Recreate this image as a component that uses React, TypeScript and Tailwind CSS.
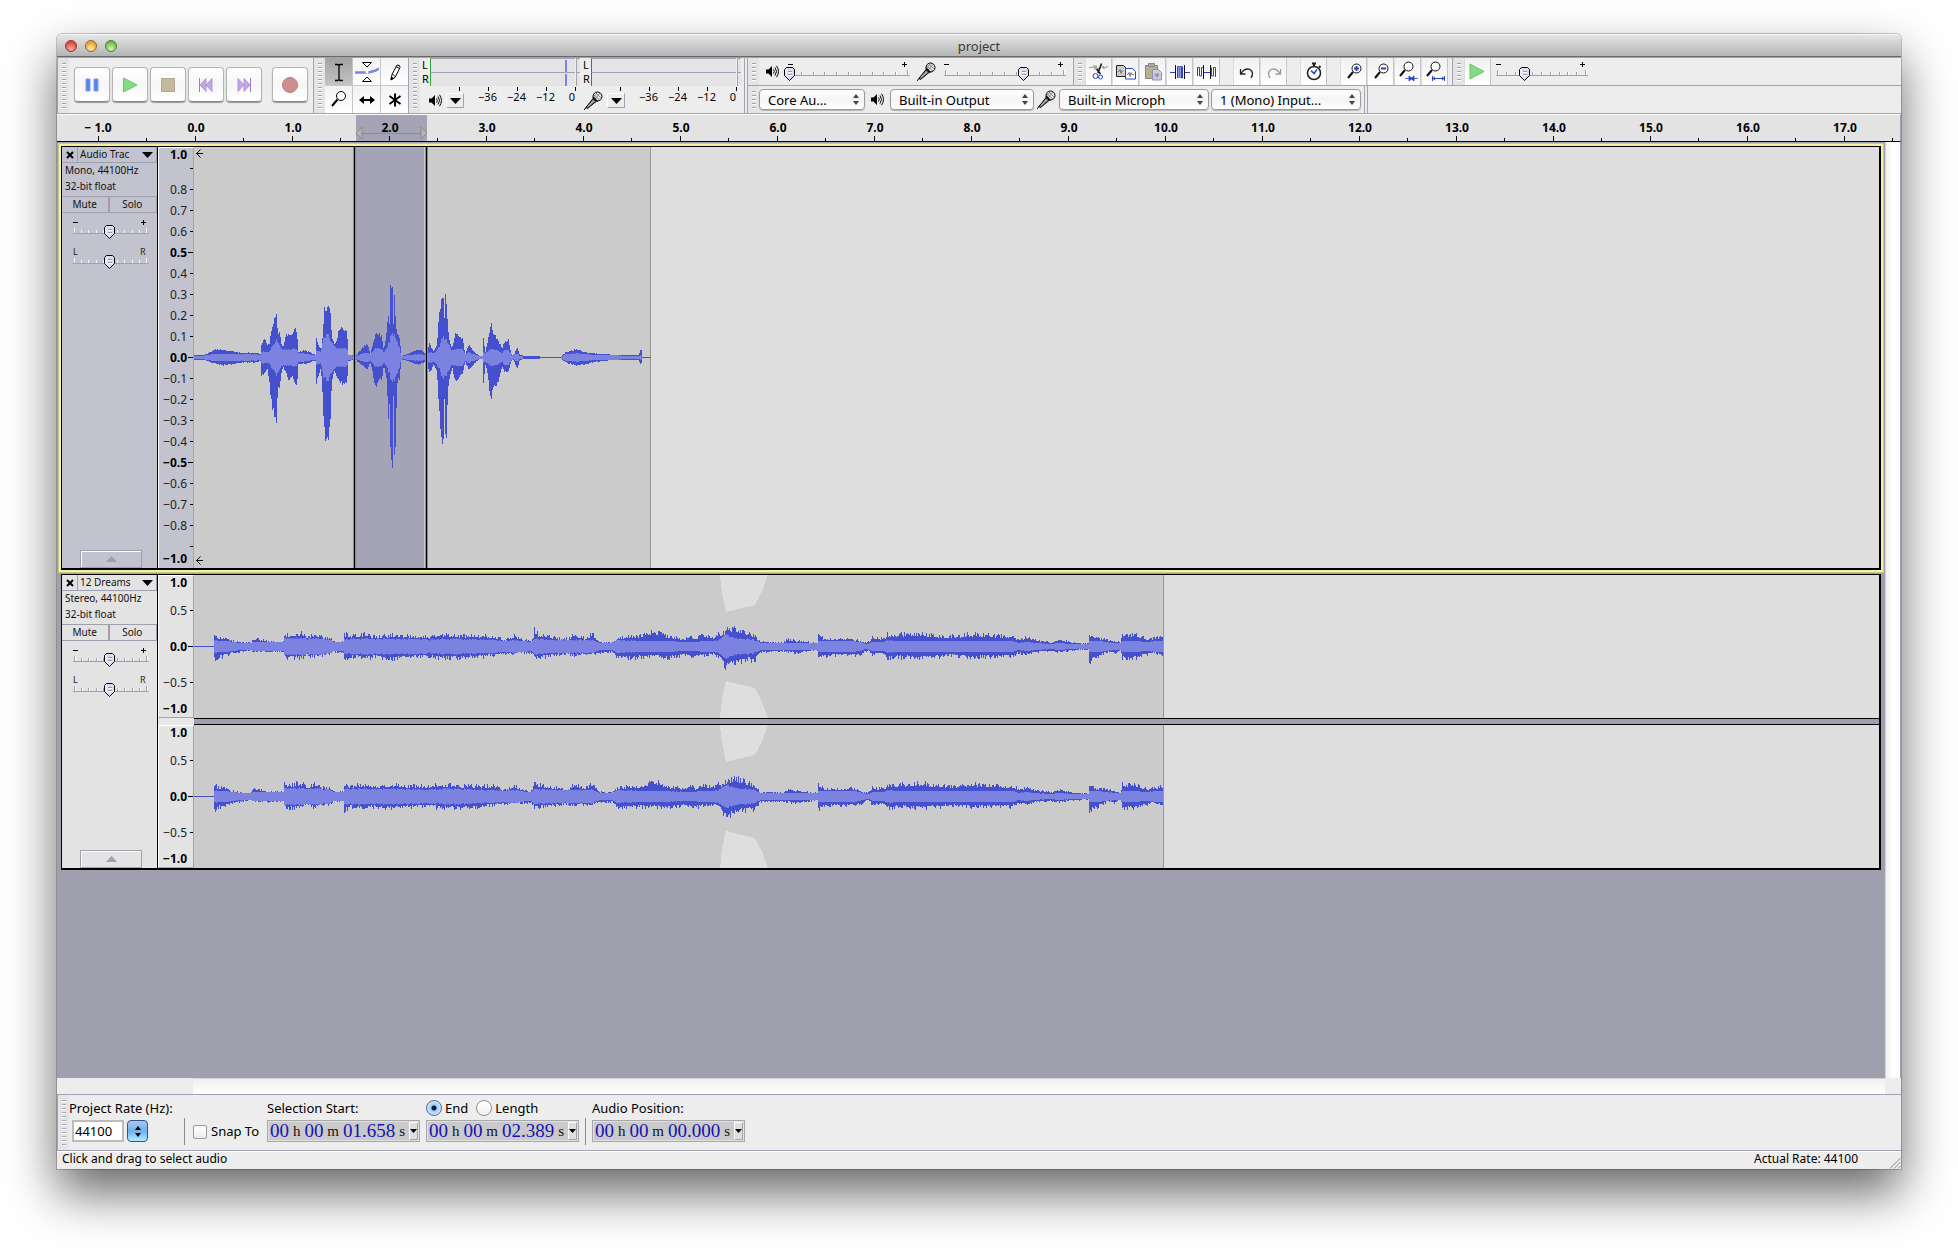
import React, { useMemo, useState } from "react";

type EnvPoint = [x: number, top: number, bottom: number, rms: number];

// Offsets in thirds of a pixel, amplitudes likewise.
const SPEECH: EnvPoint[] = [
  [0, 6, 6, 4], [28, 6, 6, 4], [63, 24, 18, 10], [88, 22, 22, 10], [113, 20, 20, 9], [138, 13, 15, 8], [188, 14, 14, 8],
  [198, 10, 10, 7], [201, 40, 54, 15], [210, 62, 52, 16], [220, 38, 35, 14], [226, 45, 90, 18], [232, 95, 150, 30],
  [240, 120, 185, 42], [247, 139, 205, 56], [250, 74, 100, 40], [256, 78, 98, 34], [260, 45, 50, 25], [266, 30, 30, 20],
  [273, 62, 42, 22], [283, 74, 74, 22], [293, 76, 58, 25], [305, 88, 94, 24], [309, 60, 60, 20], [311, 16, 20, 12],
  [333, 20, 18, 10], [363, 8, 8, 5], [366, 64, 80, 20], [373, 36, 50, 18], [380, 22, 32, 15], [384, 60, 110, 48],
  [387, 110, 170, 60], [390, 150, 235, 62], [396, 158, 275, 66], [403, 175, 250, 66], [408, 150, 200, 52], [412, 70, 75, 42],
  [420, 40, 42, 30], [428, 58, 65, 26], [436, 95, 75, 25], [451, 88, 80, 25], [458, 80, 80, 25], [462, 7, 10, 6],
  [475, 6, 6, 4], [486, 7, 8, 4], [503, 28, 24, 10], [518, 42, 38, 12], [528, 10, 15, 8], [543, 75, 90, 25],
  [553, 75, 74, 25], [563, 64, 64, 25], [568, 16, 20, 12], [576, 80, 64, 25], [583, 150, 215, 45], [586, 85, 125, 45],
  [588, 210, 285, 70], [594, 212, 330, 76], [597, 112, 112, 60], [600, 208, 308, 62], [603, 140, 280, 56],
  [606, 95, 155, 50], [610, 68, 64, 40], [617, 62, 75, 24], [619, 3, 3, 2], [638, 9, 9, 5], [673, 25, 22, 8],
  [693, 12, 12, 6], [706, 44, 48, 15], [718, 16, 20, 10], [728, 44, 48, 20], [733, 125, 150, 30], [738, 165, 210, 40],
  [741, 190, 268, 50], [747, 194, 268, 60], [749, 70, 70, 55], [752, 202, 260, 60], [756, 180, 250, 50],
  [758, 130, 185, 45], [761, 94, 104, 40], [766, 46, 64, 30], [773, 30, 30, 20], [784, 80, 80, 25], [794, 68, 64, 25],
  [806, 54, 48, 22], [812, 8, 10, 7], [823, 38, 38, 15], [838, 20, 20, 8], [853, 4, 4, 3], [864, 4, 4, 3], [866, 64, 84, 15],
  [873, 16, 20, 12], [880, 54, 54, 18], [890, 108, 138, 25], [896, 82, 92, 24], [903, 68, 94, 20], [913, 48, 68, 18],
  [923, 26, 26, 12], [930, 48, 42, 20], [943, 54, 40, 20], [950, 10, 10, 7], [958, 5, 5, 3], [968, 32, 38, 12],
  [976, 6, 6, 3], [988, 4, 4, 1], [1033, 4, 4, 1], [1038, 1, 1, 0], [1098, 1, 1, 0], [1113, 14, 14, 8], [1148, 25, 24, 12],
  [1173, 14, 19, 8], [1208, 11, 11, 6], [1258, 7, 7, 5], [1308, 6, 6, 4], [1333, 7, 7, 4], [1340, 30, 24, 6], [1343, 1, 1, 0],
  [1368, 1, 1, 0],
];

const MUSIC: EnvPoint[] = [
  [0, 0, 0, 0], [19, 0, 0, 0], [20, 15, 14, 5], [21, 14, 20, 6], [23, 10, 13, 5], [33, 10, 10, 5], [37, 6, 8, 4],
  [50, 4, 5, 3], [57, 4, 4, 3], [58, 9, 5, 4], [65, 8, 6, 4], [75, 5, 6, 4], [89, 5, 5, 4], [90, 14, 10, 8], [92, 13, 14, 8],
  [108, 15, 12, 8], [112, 11, 10, 7], [121, 14, 12, 8], [130, 10, 9, 7], [136, 9, 8, 6], [140, 5, 6, 4], [149, 5, 6, 4],
  [150, 14, 16, 7], [156, 12, 12, 7], [172, 14, 13, 7], [181, 11, 12, 7], [200, 13, 14, 7], [215, 12, 12, 7],
  [235, 11, 11, 6], [245, 14, 13, 7], [268, 12, 13, 7], [290, 12, 11, 6], [300, 12, 10, 6], [309, 7, 8, 5],
  [320, 12, 8, 6], [326, 8, 7, 5], [337, 6, 7, 4], [339, 10, 10, 6], [340, 20, 13, 7], [344, 13, 13, 7], [360, 10, 10, 6],
  [374, 8, 8, 6], [380, 14, 10, 6], [390, 9, 9, 6], [398, 14, 9, 6], [405, 5, 7, 3], [418, 4, 6, 3], [423, 10, 13, 6],
  [446, 12, 12, 5], [461, 17, 12, 5], [475, 11, 13, 5], [490, 8, 10, 4], [496, 14, 12, 4], [501, 9, 12, 4],
  [508, 13, 10, 5], [519, 10, 9, 5], [524, 16, 12, 6], [527, 13, 16, 8], [532, 18, 25, 11], [540, 21, 18, 8],
  [546, 19, 17, 7], [555, 15, 15, 7], [560, 12, 16, 6], [566, 5, 6, 3], [589, 4, 5, 3], [593, 8, 6, 3], [603, 6, 7, 3],
  [621, 4, 4, 3], [623, 4, 4, 3], [624, 14, 14, 5], [630, 8, 11, 5], [657, 9, 10, 5], [666, 6, 9, 4], [671, 4, 5, 2],
  [674, 5, 4, 2], [678, 10, 9, 4], [689, 9, 8, 4], [691, 10, 12, 5], [693, 14, 14, 6], [703, 13, 12, 5], [726, 15, 13, 5],
  [742, 12, 12, 5], [757, 11, 10, 5], [762, 12, 11, 5], [779, 14, 12, 5], [799, 12, 12, 5], [819, 11, 11, 5], [824, 8, 7, 3],
  [832, 10, 9, 4], [842, 7, 6, 3], [857, 4, 5, 2], [865, 8, 6, 3], [878, 4, 4, 2], [894, 3, 3, 2], [895, 15, 20, 5],
  [898, 10, 15, 5], [905, 9, 11, 5], [912, 8, 6, 4], [921, 6, 7, 3], [926, 4, 3, 3], [928, 14, 13, 5], [942, 13, 13, 5],
  [953, 8, 9, 4], [960, 9, 7, 5], [968, 12, 11, 5],
];

function noise(n: number) {
  const v = Math.sin(n * 127.1 + 11.7) * 43758.5453;
  return v - Math.floor(v);
}

function buildWave(points: EnvPoint[], center: number, divisor: number, seed: number, rough: number) {
  let peak = "";
  let rms = "";
  const last = Math.floor(points[points.length - 1][0] / divisor);
  const jitter = (n: number) => 1.04 - rough * (1 - noise(n) ** 2);
  let i = 0;

  for (let x = 0; x <= last; x++) {
    const pos = x * divisor;
    while (i < points.length - 2 && points[i + 1][0] <= pos) i++;
    const a = points[i];
    const b = points[i + 1];
    const f = Math.min(1, Math.max(0, (pos - a[0]) / (b[0] - a[0])));
    const mix = (k: 1 | 2 | 3) => (a[k] + (b[k] - a[k]) * f) / divisor;

    const top = Math.round(mix(1) * jitter(x + seed));
    const bottom = Math.round(mix(2) * jitter(x * 3 + seed + 5));
    const inner = Math.round(mix(3) * (0.9 + 0.2 * noise(x * 2 + seed + 9)));

    peak += `M${x} ${center - top}h1v${top + bottom + 1}h-1z`;
    if (inner > 0) rms += `M${x} ${center - inner}h1v${inner * 2 + 1}h-1z`;
  }
  return { peak, rms };
}

function Grip({ tall = false }: { tall?: boolean }) {
  return (
    <div className="flex w-[11px] shrink-0 items-center justify-center bg-[#e4e4e6]">
      <div
        className={
          (tall ? "h-[46px]" : "h-[18px]") +
          " w-1 bg-[repeating-linear-gradient(to_bottom,#a2a2b2_0px,#a2a2b2_1px,#ffffff_1px,#ffffff_2px,#e4e4e6_2px,#e4e4e6_4px)]"
        }
      />
    </div>
  );
}

function Speaker() {
  return (
    <svg className="shrink-0" width="13" height="13" viewBox="0 0 13 13" fill="none" stroke="#000">
      <path d="M0 4.500h2.500L6 1v11L2.500 8.500H0z" fill="#000" stroke="none" />
      <path d="M7.500 4.500q1.600 2 0 4M9 2.500q3 4 0 8M10.500 .8q4 5.700 0 11.400" strokeWidth="1" />
    </svg>
  );
}

function Mic() {
  return (
    <svg className="shrink-0" width="19" height="19" viewBox="0 0 19 19" fill="none" stroke="#000">
      <path d="M0 19l3-4" />
      <path d="M2 16.500L9 7.500l3 3L3.500 17.500z" fill="#777" />
      <path d="M4 15.500l6-6" stroke="#ddd" />
      <circle cx="13.500" cy="5.500" r="4.500" fill="#e6e6e6" />
      <path d="M10 4l6 5M12 2l5 5M11 8l5-6M9.500 6l4-4.500" stroke="#666" strokeWidth=".7" />
      <path d="M9 6l4.500 4.500" strokeWidth="1.500" />
    </svg>
  );
}

type SliderProps = { label: string; length: number; initial: number; ends?: "sign" | "pan"; onDark?: boolean };

function Slider({ label, length, initial, ends = "sign", onDark = false }: SliderProps) {
  const [value, setValue] = useState(initial);
  const width = length + 10;
  const first = 6;
  const span = length - 4;
  const thumb = Math.round(first + span * value) - 5;
  const ticks = Array.from({ length: 11 }, (_, i) => Math.round(first + (span * i) / 10));

  return (
    <div className="relative h-6 shrink-0">
      <svg width={width} height="24" className="block" shapeRendering="crispEdges">
        {ends === "sign" ? (
          <path d={`M5 4h5v1h-5zM${length - 3} 4h5v1h-5zM${length - 1} 2h1v5h-1z`} fill="#000" />
        ) : (
          <>
            <text x="5" y="7" fontSize="9" fill="#222">L</text>
            <text x={length - 4} y="7" fontSize="9" fill="#222">R</text>
          </>
        )}
        <path d={`M5 15h${length}v1h-${length}z`} fill="#9f9fb0" />
        {ticks.map((x, i) => {
          const end = i === 0 || i === 10;
          return (
            <g key={x}>
              <rect x={x + 1} y={end ? 10 : 12} width="1" height={end ? 5 : 3} fill={onDark ? "#c3c3cf" : "#fff"} />
              <rect x={x} y={end ? 10 : 12} width="1" height={end ? 5 : 3} fill={onDark ? "#f4f4fa" : "#9f9fb0"} />
            </g>
          );
        })}
        <g transform={`translate(${thumb} 7)`} shapeRendering="auto">
          <path d="M2.500 .5h6l2 2v6l-5 5-5-5v-6z" fill="#dcdcf0" stroke="#000" />
          <path d="M2 2.500v6l3 3" stroke="#fff" fill="none" />
          <path d="M4 4.500h4M4 7.500h4" stroke="#9696b4" />
          <path d="M4 5.500h4M4 8.500h4" stroke="#fff" />
        </g>
      </svg>
      <input
        type="range"
        aria-label={label}
        min={0}
        max={1}
        step={0.01}
        value={value}
        onChange={(e) => setValue(Number(e.target.value))}
        className="absolute inset-0 m-0 h-full w-full opacity-0"
      />
    </div>
  );
}

function TransportButton({ label, children, className = "" }: { label: string; children: React.ReactNode; className?: string }) {
  return (
    <button
      type="button"
      aria-label={label}
      className={
        "flex h-[35px] w-9 items-center justify-center rounded-[4px] border border-[#b4b4b4] border-b-[#858585] bg-linear-to-b from-white via-[#f6f6f6] to-white shadow-[0_1px_1px_rgba(0,0,0,0.35)] " +
        className
      }
    >
      {children}
    </button>
  );
}

function Skip({ forward = false }: { forward?: boolean }) {
  return (
    <svg width="16" height="16" viewBox="0 0 16 16" className={forward ? "-scale-x-100" : ""}>
      <path d="M1.500 1v14" stroke="#9a7cc8" />
      <path d="M8 1.500v13L2 8zM14 1.500v13L8 8z" fill="#c3a6e4" stroke="#a68acb" strokeWidth=".8" />
    </svg>
  );
}

function Transport() {
  return (
    <div className="flex w-[257px] shrink-0 border-r border-l border-[#a2a2b2]">
      <Grip tall />
      <div className="flex items-center gap-[2px] pb-[2px] pl-[5px]">
        <TransportButton label="Pause">
          <svg width="14" height="14" viewBox="0 0 14 14">
            <path d="M1 1h4v12H1zM9 1h4v12H9z" fill="#5583ee" stroke="#7aa0f5" />
          </svg>
        </TransportButton>
        <TransportButton label="Play">
          <svg width="16" height="16" viewBox="0 0 16 16">
            <path d="M1.500 1v14L15 8z" fill="#86da86" stroke="#6cc36c" />
          </svg>
        </TransportButton>
        <TransportButton label="Stop">
          <svg width="14" height="14" viewBox="0 0 14 14">
            <path d="M.5 .5h13v13H.5z" fill="#c4b89e" stroke="#b3a78d" />
          </svg>
        </TransportButton>
        <TransportButton label="Skip to Start"><Skip /></TransportButton>
        <TransportButton label="Skip to End"><Skip forward /></TransportButton>
        <TransportButton label="Record" className="ml-2">
          <svg width="16" height="16" viewBox="0 0 16 16">
            <circle cx="8" cy="8" r="7.500" fill="#cb8f8f" stroke="#b97e7e" />
          </svg>
        </TransportButton>
      </div>
    </div>
  );
}

const TOOLS: { label: string; icon: React.ReactNode }[] = [
  {
    label: "Selection Tool",
    icon: <path d="M8 4.500h3l1 1 1-1h3M8 20.500h3l1-1 1 1h3M12 5v15" stroke="#000" strokeWidth="1.300" fill="none" />,
  },
  {
    label: "Envelope Tool",
    icon: (
      <>
        <path d="M0 12.500h11q7 0 13-4" stroke="#7c84e2" strokeWidth="2.500" fill="none" />
        <path d="M7.500 2.500h9l-4.500 4.500zM7.500 21.500h9l-4.500-4.500z" fill="#fff" stroke="#000" />
        <circle cx="12" cy="12" r="1.500" fill="#fff" />
      </>
    ),
  },
  {
    label: "Draw Tool",
    icon: (
      <>
        <path d="M8 19.500l1-5 5-9.500 2.500 .5 .5 2-5 10z" fill="#fff" stroke="#000" />
        <path d="M8 20l.5-3 1.800 1.500zM13 6.500l3.500 2M9.500 14l2.500 2.500" fill="#000" stroke="#000" />
      </>
    ),
  },
  {
    label: "Zoom Tool",
    icon: (
      <>
        <circle cx="14" cy="8" r="4.500" fill="#fff" stroke="#000" />
        <path d="M10.500 11.500L5 18" stroke="#000" strokeWidth="2" />
      </>
    ),
  },
  {
    label: "Time Shift Tool",
    icon: <path d="M4 12l5-4v3h6V8l5 4-5 4v-3H9v3z" fill="#000" />,
  },
  {
    label: "Multi-Tool Mode",
    icon: <path d="M12 5.500v13M6.500 8l11 8M17.500 8l-11 8" stroke="#000" strokeWidth="2" />,
  },
];

function Tools() {
  return (
    <div className="flex w-[95px] shrink-0 border-r border-[#a2a2b2]">
      <Grip tall />
      <div className="grid flex-1 grid-cols-3 gap-px bg-[#c6c6c8]">
        {TOOLS.map((tool, i) => (
          <button
            key={tool.label}
            type="button"
            aria-label={tool.label}
            className={
              "flex h-[27px] items-center justify-center " +
              (i === 0 ? "bg-linear-to-b from-[#a2a2a2] to-[#c4c4c4]" : "bg-linear-to-b from-[#f2f2f2] to-white")
            }
          >
            <svg width="24" height="24" viewBox="0 0 24 24">{tool.icon}</svg>
          </button>
        ))}
      </div>
    </div>
  );
}

function Meter({ label, edge, peak, icon }: { label: string; edge: string; peak?: boolean; icon: React.ReactNode }) {
  return (
    <div className="w-[161px]">
      {["L", "R"].map((channel) => (
        <div key={channel} className="flex h-[14px] text-[11px] leading-[14px]">
          <span className="w-[10px] pl-[2px]">{channel}</span>
          <div className={"flex w-[145px] border-t border-t-[#a2a2b2] border-l bg-[#e4e4e4] pt-px " + edge}>
            {peak && <div className="ml-[134px] w-[2px] bg-[#7c80f4]" />}
          </div>
          <div className="ml-px w-[4px] border-t border-l border-[#a2a2b2] bg-[#e4e4e4]" />
        </div>
      ))}
      <svg width="161" height="5" className="block" shapeRendering="crispEdges">
        <path d="M39 1h1v4h-1zM68 1h1v4h-1zM97 1h1v4h-1zM126 1h1v4h-1zM155 1h1v4h-1z" fill="#000" />
      </svg>
      <div className="flex">
        <div className="flex h-[19px] w-[26px] items-center justify-end pr-1">{icon}</div>
        <button
          type="button"
          aria-label={label}
          className="mt-[2px] flex h-[15px] w-[18px] items-center justify-center border border-t-white border-r-[#a2a2b2] border-b-[#a2a2b2] border-l-white"
        >
          <svg width="11" height="6" viewBox="0 0 11 6"><path d="M0 0h11L5.500 6z" /></svg>
        </button>
        <div className="flex pl-[9px] text-[11px] leading-3">
          <span className="w-[29px] text-center">−36</span>
          <span className="w-[29px] text-center">−24</span>
          <span className="w-[29px] text-center">−12</span>
          <span className="w-[15px] text-right">0</span>
        </div>
      </div>
    </div>
  );
}

function Select({ label, value, className }: { label: string; value: string; className: string }) {
  return (
    <div className={"relative h-[21px] shrink-0 " + className}>
      <select
        aria-label={label}
        className="block h-full w-full appearance-none rounded-[4px] border border-[#9a9a9a] bg-linear-to-b from-white via-[#f4f4f4] to-white pr-5 pl-2 text-[13px] leading-[18px] shadow-[0_1px_1px_rgba(0,0,0,0.25)]"
      >
        <option>{value}</option>
      </select>
      <svg className="pointer-events-none absolute top-[5px] right-[6px]" width="6" height="11" viewBox="0 0 6 11" fill="#444">
        <path d="M0 4l3-4 3 4zM0 7l3 4 3-4z" />
      </svg>
    </div>
  );
}

function Glass({ children }: { children?: React.ReactNode }) {
  return (
    <>
      <circle cx="14.500" cy="8.500" r="4.500" fill="#fff" stroke="#111" />
      <path d="M11 12l-5 6" stroke="#111" strokeWidth="2" />
      {children}
    </>
  );
}

const EDIT_GROUPS: { label: string; icon: React.ReactNode }[][] = [
  [
    {
      label: "Cut",
      icon: (
        <>
          <path d="M2 7.500h4l1-2 1 4 1-4 1 3h2M15 8l1-2 1 3 1-2h3" stroke="#999" fill="none" />
          <path d="M14.500 3.500L11 13M9.500 9l4 5" stroke="#111" strokeWidth="1.500" />
          <g stroke="#2a44c4" fill="none"><circle cx="8.500" cy="16" r="2.500" /><circle cx="13.500" cy="17" r="2" /></g>
        </>
      ),
    },
    {
      label: "Copy",
      icon: (
        <>
          <path d="M2.500 5.500h7l2.500 2.500v8.500H2.500z" fill="#ccc" stroke="#222" />
          <path d="M4 11.500h1l1-2 1 4 1-3 1 1" stroke="#777" fill="none" />
          <path d="M11.500 8.500h7l3 3v7.500h-10z" fill="#fff" stroke="#2a44c4" />
          <path d="M13 14.500h1l1-2 1 4 1-4 1 2h2" stroke="#777" fill="none" />
        </>
      ),
    },
    {
      label: "Paste",
      icon: (
        <>
          <path d="M4.500 5.500h12v13h-12z" fill="#b6b093" stroke="#8c8871" />
          <path d="M7.500 3.500h6v3h-6z" fill="#aaa" stroke="#888" />
          <path d="M11.500 9.500h6l3 3v7.500h-9z" fill="#ccd" stroke="#8a90b8" />
          <path d="M13 15.500h1l1-2 1 4 1-4 1 2" stroke="#889" fill="none" />
        </>
      ),
    },
    {
      label: "Trim",
      icon: (
        <>
          <path d="M2 12.500h5M17 12.500h5" stroke="#2a44c4" />
          <path d="M7.500 5v14M16.500 5v14" stroke="#111" />
          <path d="M9.500 18V6.500h1.500V18M12 18V6.500h1.500V18h1V6.500" stroke="#2a44c4" fill="none" />
        </>
      ),
    },
    {
      label: "Silence",
      icon: (
        <>
          <path d="M2.500 16V7.500h2V16h2V7.500h1.500M16.500 7.500V16h2V7.500h2V17" stroke="#2a44c4" fill="none" />
          <path d="M9 12.500h6" stroke="#2a44c4" />
          <path d="M8.500 5v14M15.500 5v14" stroke="#111" />
        </>
      ),
    },
  ],
  [
    { label: "Undo", icon: <path d="M5.500 9v5h5M6 13.500q4-6 9-4 4.500 3 1 8.500" stroke="#222" strokeWidth="1.300" fill="none" /> },
    { label: "Redo", icon: <path d="M18.500 9v5h-5M18 13.500q-4-6-9-4-4.500 3-1 8.500" stroke="#999" strokeWidth="1.300" fill="none" /> },
  ],
  [
    {
      label: "Sync-Lock Tracks",
      icon: (
        <>
          <circle cx="12" cy="13" r="6.500" fill="#fff" stroke="#222" strokeWidth="1.600" />
          <path d="M10 3.500h4M12 3.500v3M17 6l1.500 1.500" stroke="#222" strokeWidth="2" />
          <path d="M9 10.500l3 3 3-4" stroke="#2a44c4" strokeWidth="1.500" fill="none" />
        </>
      ),
    },
  ],
  [
    { label: "Zoom In", icon: <Glass><path d="M12 8.500h5M14.500 6v5" stroke="#2a44c4" strokeWidth="2" /></Glass> },
    { label: "Zoom Out", icon: <Glass><path d="M12 8.500h5" stroke="#2a44c4" strokeWidth="2" /></Glass> },
    {
      label: "Fit Selection",
      icon: (
        <g transform="translate(-2 -2)">
          <Glass>
            <path d="M11 20.500h13M15 18l3 2.500-3 2.500zM20 18l-3 2.500 3 2.500z" stroke="#2a44c4" fill="#2a44c4" strokeWidth=".8" />
          </Glass>
        </g>
      ),
    },
    {
      label: "Fit Project",
      icon: (
        <g transform="translate(-2 -2)">
          <Glass>
            <path d="M11.500 18v5M23.500 18v5M12 20.500h11M14 19l-2 1.500 2 1.500M21 19l2 1.500-2 1.500" stroke="#2a44c4" fill="none" />
          </Glass>
        </g>
      ),
    },
  ],
];

function IconButton({ label, children }: { label: string; children: React.ReactNode }) {
  return (
    <button
      type="button"
      aria-label={label}
      className="flex h-[27px] w-[27px] items-center justify-center border-r border-l border-r-[#c6c6ca] border-l-[#dcdcdc] bg-linear-to-b from-[#f0f0f0] to-white"
    >
      <svg width="24" height="24" viewBox="0 0 24 24">{children}</svg>
    </button>
  );
}

function Toolbars() {
  return (
    <div className="flex h-[57px] shrink-0 border-t border-b border-[#a2a2b2] bg-[#ededed]">
      <Transport />
      <Tools />
      <div className="flex w-[336px] shrink-0 border-r border-[#a2a2b2]">
        <Grip tall />
        <Meter label="Output meter options" edge="border-l-[#35a035]" peak icon={<Speaker />} />
        <Meter label="Input meter options" edge="border-l-[#b04444]" icon={<Mic />} />
      </div>
      <div className="ml-[2px] flex min-w-0 flex-1 flex-col overflow-hidden border-l border-[#a2a2b2]">
        <div className="flex h-7 shrink-0 border-b border-[#a2a2b2]">
          <div className="flex w-[326px] shrink-0 border-r border-[#a2a2b2]">
            <Grip />
            <div className="flex items-center pl-[7px]">
              <Speaker />
              <div className="w-1" />
              <Slider label="Output Volume" length={122} initial={0} />
              <div className="w-[2px]" />
              <Mic />
              <div className="w-[3px]" />
              <Slider label="Input Volume" length={122} initial={0.66} />
            </div>
          </div>
          <div className="flex w-[379px] shrink-0 border-r border-[#a2a2b2]">
            <Grip />
            <div className="flex gap-[13px]">
              {EDIT_GROUPS.map((group) => (
                <div key={group[0].label} className="flex">
                  {group.map((item) => (
                    <IconButton key={item.label} label={item.label}>{item.icon}</IconButton>
                  ))}
                </div>
              ))}
            </div>
          </div>
          <Grip />
          <IconButton label="Play at Speed">
            <path d="M4 4v15l14-7.500z" fill="#86da86" stroke="#6cc36c" />
          </IconButton>
          <div className="flex items-center">
            <Slider label="Playback Speed" length={92} initial={0.31} />
          </div>
        </div>
        <div className="flex min-h-0 flex-1">
          <Grip />
          <div className="flex shrink-0 items-center border-r border-[#a2a2b2] pr-[3px]">
            <Select label="Audio Host" value="Core Au..." className="w-[106px]" />
            <div className="px-[6px]"><Speaker /></div>
            <Select label="Output Device" value="Built-in Output" className="w-[144px]" />
            <div className="px-[3px]"><Mic /></div>
            <Select label="Input Device" value="Built-in Microph" className="w-[150px]" />
            <div className="w-[2px]" />
            <Select label="Input Channels" value="1 (Mono) Input..." className="w-[150px]" />
          </div>
          <div className="ml-[2px] border-l border-[#a2a2b2]" />
        </div>
      </div>
    </div>
  );
}

function Timeline() {
  const zero = 138;
  const marks = Array.from({ length: 19 }, (_, i) => i - 1);
  return (
    <div className="h-7 shrink-0 overflow-hidden border-t border-r border-b border-t-white border-r-[#a2a2b2] border-b-black bg-[#e3e3e3]">
      <svg width="100%" height="26" className="block" shapeRendering="crispEdges">
        <rect x="299" y="0" width="71" height="26" fill="#a4a4b6" />
        <path d="M299.500 18.500h70" stroke="#8c8c98" />
        <path d="M305 12v12l-6-6zM364 12v12l6-6z" fill="#b4b4b4" stroke="#8a8a8a" shapeRendering="auto" />
        {marks.map((n) => {
          const x = zero + Math.round(n * 97.02);
          return (
            <g key={n}>
              <rect x={x} y="21" width="1" height="5" />
              <rect x={x + 48} y="23" width="1" height="3" />
              {n < 18 && (
                <text x={n < 0 ? x : x + 1} y="17" textAnchor="middle" fontSize="12" fontWeight="700">
                  {n < 0 ? `− ${Math.abs(n)}.0` : `${n}.0`}
                </text>
              )}
            </g>
          );
        })}
      </svg>
    </div>
  );
}

type ScaleMark = { value: number; text?: string; bold?: boolean; y: number };

function VerticalScale({ marks, height, className }: { marks: ScaleMark[]; height: number; className: string }) {
  return (
    <svg
      width="36"
      height={height}
      className={"block shrink-0 border-t border-r border-l border-t-white border-r-[#a2a2b2] border-l-white " + className}
    >
      {marks.map((m) => (
        <g key={m.value}>
          {Math.abs(m.value) < 1 && <rect x={m.bold ? 29 : 31} y={m.y} width={m.bold ? 5 : 3} height="1" />}
          {m.text && (
            <text
              x="28"
              y={(m.value === 1 ? 6 : m.value === -1 ? height - 11 : m.y) + 5}
              textAnchor="end"
              fontSize="12"
              fontWeight={m.bold ? 700 : 400}
              fill={m.bold ? "#000" : "#222"}
            >
              {m.text}
            </text>
          )}
        </g>
      ))}
    </svg>
  );
}

function makeMarks(step: number, center: number, unit: number, boldHalf: boolean): ScaleMark[] {
  const count = Math.round(1 / step);
  const out: ScaleMark[] = [];
  for (let i = count; i >= -count; i--) {
    const value = i * step;
    const abs = Math.abs(value);
    out.push({
      value: Math.abs(i) === count ? Math.sign(i) : value,
      text: Math.abs(abs - 0.9) < 0.01 ? undefined : (i < 0 ? "−" : "") + abs.toFixed(1),
      bold: i === 0 || Math.abs(i) === count || (boldHalf && Math.abs(abs - 0.5) < 0.01),
      y: Math.round(center - value * unit),
    });
  }
  return out;
}

const TALL_MARKS = makeMarks(0.1, 209, 210, true);
const SHORT_MARKS = makeMarks(0.5, 70, 72, false);

type PanelProps = { name: string; format: string; className: string; onDark?: boolean };

function TrackPanel({ name, format, className, onDark }: PanelProps) {
  return (
    <div className={"flex w-24 shrink-0 flex-col border-r border-r-black text-[10px] text-[#111] " + className}>
      <div className="flex h-4 border-b border-[#9f9fae]">
        <button type="button" aria-label="Close track" className="flex w-4 items-center justify-center border-r border-[#9f9fae]">
          <svg width="8" height="8" viewBox="0 0 8 8"><path d="M1 1l6 6M7 1L1 7" stroke="#000" strokeWidth="2" /></svg>
        </button>
        <button type="button" className="flex flex-1 items-center justify-between border-r border-[#9f9fae] pr-[3px] pl-[2px] leading-3">
          <span className="pb-px">{name}</span>
          <svg width="11" height="6" viewBox="0 0 11 6"><path d="M0 0h11L5.500 6z" /></svg>
        </button>
      </div>
      <div className="pb-px pl-[3px] leading-4">
        <div className="-mt-px">{format}</div>
        <div>32-bit float</div>
      </div>
      <div className="mt-px flex h-[17px] border-t border-b border-[#9f9fae] leading-3">
        <button type="button" className="flex-1 border-r-2 border-[#9f9fae] pb-[2px]">Mute</button>
        <button type="button" className="flex-1 border-r border-[#9f9fae] pr-px pb-[2px]">Solo</button>
      </div>
      <div className="flex flex-col gap-[6px] pt-[5px] pl-[6px]">
        <Slider label={`${name} gain`} length={76} initial={0.49} onDark={onDark} />
        <Slider label={`${name} pan`} length={76} initial={0.49} ends="pan" onDark={onDark} />
      </div>
      <button
        type="button"
        aria-label="Collapse track"
        className="mt-auto ml-[18px] flex h-[18px] w-[62px] items-center justify-center border border-[#9f9fae] shadow-[inset_1px_1px_0_#ffffff]"
      >
        <svg width="11" height="6" viewBox="0 0 11 6"><path d="M0 6h11L5.500 0z" fill="#9f9fae" /></svg>
      </button>
    </div>
  );
}

function SpeechWave() {
  const wave = useMemo(() => buildWave(SPEECH, 210, 3, 3, 0.16), []);
  return (
    <svg width="100%" height="421" className="block" shapeRendering="crispEdges">
      <rect width="100%" height="421" fill="#dedede" />
      <rect width="456" height="421" fill="#cbcbcb" />
      <rect x="456" width="1" height="421" fill="#969696" />
      <rect x="162" width="68" height="421" fill="#a4a4b6" />
      <path d={wave.peak} fill="#4450ce" />
      <path d={wave.rms} fill="#7b82e0" />
      <path d="M159 0h3v421h-3zM231 0h3v421h-3z" fill="#8c8c8c" />
      <path d="M160 0h1v421h-1zM232 0h1v421h-1z" fill="#000" />
      <path d="M9 6.500H2.500M6.500 2.500l-4 4 4 4M9 413.500H2.500M6.500 409.500l-4 4 4 4" stroke="#000" fill="none" shapeRendering="auto" />
    </svg>
  );
}

function MusicWave({ seed }: { seed: number }) {
  const wave = useMemo(() => buildWave(MUSIC, 71, 1, seed, 0.36), [seed]);
  return (
    <svg width="100%" height="143" className="block" shapeRendering="crispEdges">
      <rect width="100%" height="143" fill="#dedede" />
      <rect width="969" height="143" fill="#cbcbcb" />
      <rect x="969" width="1" height="143" fill="#969696" />
      <path d="M526 0l2 18 4 19 12-3 17-4 7-14 6-16zM526 143l2-20 4-17 12 3 17 4 7 14 6 16z" fill="#dedede" />
      <path d={wave.peak} fill="#4450ce" />
      <path d={wave.rms} fill="#7b82e0" />
    </svg>
  );
}

function Workspace() {
  return (
    <div className="flex min-h-0 flex-1">
      <div className="min-w-0 flex-1 overflow-hidden bg-[#a09fae] pt-[2px] pr-[2px] pl-[2px]">
        <section
          aria-label="Audio Track"
          className="border-2 border-[#f6f19c] bg-black pt-px pr-[2px] pb-[2px] pl-px shadow-[0_0_0_1px_#c9c58f]"
        >
          <div className="flex h-[421px]">
            <TrackPanel name="Audio Trac" format="Mono, 44100Hz" className="bg-[#c3c3cf]" onDark />
            <VerticalScale marks={TALL_MARKS} height={421} className="bg-[#c3c3cf]" />
            <div className="min-w-0 flex-1"><SpeechWave /></div>
          </div>
        </section>
        <section aria-label="12 Dreams" className="mx-[2px] mt-[2px] bg-black pt-px pr-[2px] pb-[2px] pl-px">
          <div className="flex h-[293px]">
            <TrackPanel name="12 Dreams" format="Stereo, 44100Hz" className="bg-[#e3e3e3]" />
            <div className="flex shrink-0 flex-col justify-between bg-[#e8e8e8]">
              <VerticalScale marks={SHORT_MARKS} height={143} className="border-b border-b-[#a2a2b2] bg-[#e3e3e3]" />
              <VerticalScale marks={SHORT_MARKS} height={143} className="border-b border-b-[#a2a2b2] bg-[#e3e3e3]" />
            </div>
            <div className="min-w-0 flex-1">
              <MusicWave seed={40} />
              <div className="h-[7px] border-t border-b border-black bg-[#a09fae]" />
              <MusicWave seed={90} />
            </div>
          </div>
        </section>
      </div>
      <div className="w-4 shrink-0 border-r border-l border-r-[#a2a2b2] border-l-[#d4d4d4] bg-linear-to-r from-[#f0f0f0] via-white to-[#fafafa]" />
    </div>
  );
}

function TimeField({ label, value }: { label: string; value: [string, string, string] }) {
  return (
    <div
      role="group"
      aria-label={label}
      className="flex h-[22px] w-[153px] shrink-0 items-center justify-between border border-[#a8a8a8] bg-[#cacaca] pr-px pl-[2px] font-['Liberation_Serif',serif] text-[15px] leading-[18px] text-[#111] shadow-[inset_0_0_0_1px_#e0e0e0]"
    >
      <span className="text-[19px] text-[#1414b4]">{value[0]}</span>
      <span>h</span>
      <span className="text-[19px] text-[#1414b4]">{value[1]}</span>
      <span>m</span>
      <span className="text-[19px] text-[#1414b4]">{value[2]}</span>
      <span>s</span>
      <button
        type="button"
        aria-label={`${label} format`}
        className="flex h-[18px] w-[9px] items-center justify-center border border-t-white border-r-[#a2a2b2] border-b-[#a2a2b2] border-l-white bg-[#dedede]"
      >
        <svg width="7" height="4" viewBox="0 0 7 4" className="shrink-0"><path d="M0 0h7L3.500 4z" /></svg>
      </button>
    </div>
  );
}

function Radio({ label, checked, onSelect }: { label: string; checked: boolean; onSelect: () => void }) {
  return (
    <label className="flex items-center gap-[3px]">
      <input
        type="radio"
        name="range-mode"
        checked={checked}
        onChange={onSelect}
        className="h-4 w-4 appearance-none rounded-full border border-[#909090] bg-linear-to-b from-white to-[#f0f0f0] checked:border-[#4a6a9c] checked:bg-[radial-gradient(circle,#0b1a38_0_2px,#9fcaf2_3px,#cfe8fc_7px)]"
      />
      {label}
    </label>
  );
}

function SelectionBar() {
  const [mode, setMode] = useState<"end" | "length">("end");
  return (
    <div className="flex h-[57px] shrink-0 border border-r-0 border-[#a2a2b2] bg-[#ededed] text-[13px] leading-4">
      <Grip tall />
      <div className="flex w-[115px] shrink-0 flex-col justify-between pt-[5px] pb-2">
        <label htmlFor="project-rate" className="whitespace-nowrap">Project Rate (Hz):</label>
        <div className="flex gap-[3px] pl-[3px]">
          <input
            id="project-rate"
            defaultValue="44100"
            className="h-[22px] w-[52px] border-2 border-[#bcbcbc] bg-white pl-px text-[13px] outline-none"
          />
          <button
            type="button"
            aria-label="Choose project rate"
            className="flex h-[22px] w-[21px] items-center justify-center rounded-[4px] border border-[#33508c] bg-linear-to-b from-[#a8c8f0] via-[#6fb0ee] to-[#b4ecfc]"
          >
            <svg width="6" height="11" viewBox="0 0 6 11"><path d="M0 4l3-4 3 4zM0 7l3 4 3-4z" /></svg>
          </button>
        </div>
      </div>
      <div className="flex items-end pb-[5px]">
        <div className="h-[27px] w-px bg-[#8c8c8c]" />
      </div>
      <label className="flex w-[82px] items-end gap-[4px] pb-[11px] pl-2 whitespace-nowrap">
        <input
          type="checkbox"
          className="h-[14px] w-[14px] shrink-0 appearance-none rounded-[2px] border border-[#9a9a9a] bg-linear-to-b from-white to-[#ececec]"
        />
        Snap To
      </label>
      <div className="flex flex-col justify-between pt-[5px] pb-2">
        <div>Selection Start:</div>
        <TimeField label="Selection Start" value={["00", "00", "01.658"]} />
      </div>
      <div className="ml-[6px] flex flex-col justify-between pt-[5px] pb-2">
        <div className="flex gap-2">
          <Radio label="End" checked={mode === "end"} onSelect={() => setMode("end")} />
          <Radio label="Length" checked={mode === "length"} onSelect={() => setMode("length")} />
        </div>
        <TimeField label="Selection End" value={["00", "00", "02.389"]} />
      </div>
      <div className="flex w-[13px] items-end justify-center pb-[5px]">
        <div className="h-[27px] w-px bg-[#8c8c8c]" />
      </div>
      <div className="flex flex-col justify-between pt-[5px] pb-2">
        <div>Audio Position:</div>
        <TimeField label="Audio Position" value={["00", "00", "00.000"]} />
      </div>
    </div>
  );
}

export default function App() {
  return (
    <div className="flex h-screen flex-col overflow-hidden bg-white px-[57px] pt-[34px] pb-[79px] font-['Noto_Sans',sans-serif] text-black">
      <div className="flex min-h-0 flex-1 flex-col overflow-hidden rounded-t-[5px] bg-[#ededed] shadow-[0_0_0_1px_rgba(0,0,0,0.2),0_24px_50px_rgba(0,0,0,0.6)]">
        <header className="flex h-[23px] shrink-0 items-center border-t border-b border-t-[#f6f6f6] border-b-[#686868] bg-linear-to-b from-[#e6e6e6] to-[#b4b4b4] px-2">
          <div className="flex flex-1 gap-2">
            <button type="button" aria-label="Close" className="h-3 w-3 rounded-full border border-[#8a3a38] bg-[radial-gradient(circle_at_50%_80%,#ffb4ae,#e0443e_70%)]" />
            <button type="button" aria-label="Minimize" className="h-3 w-3 rounded-full border border-[#94682c] bg-[radial-gradient(circle_at_50%_80%,#ffe9a8,#e8a23c_70%)]" />
            <button type="button" aria-label="Zoom" className="h-3 w-3 rounded-full border border-[#4c7c38] bg-[radial-gradient(circle_at_50%_80%,#d4f6b4,#74b84c_70%)]" />
          </div>
          <h1 className="text-[13px] leading-5 text-[#3a3a3a]">project</h1>
          <div className="flex-1" />
        </header>
        <Toolbars />
        <Timeline />
        <Workspace />
        <div className="flex h-4 shrink-0">
          <div className="w-[136px]" />
          <div className="flex-1 border-t border-[#d4d4d4] bg-linear-to-b from-[#f0f0f0] to-white" />
          <div className="w-4" />
        </div>
        <SelectionBar />
        <footer className="flex h-[18px] shrink-0 border-t border-white pl-[5px] text-[12px] leading-[14px]">
          <span className="flex-1">Click and drag to select audio</span>
          <span className="w-[135px]">Actual Rate: 44100</span>
          <svg width="12" height="12" viewBox="0 0 12 12" className="self-end" stroke="#8a8a8a">
            <path d="M1 11.500L11.500 1M5 11.500L11.500 5M9 11.500l2.500-2.500" />
          </svg>
        </footer>
      </div>
    </div>
  );
}
